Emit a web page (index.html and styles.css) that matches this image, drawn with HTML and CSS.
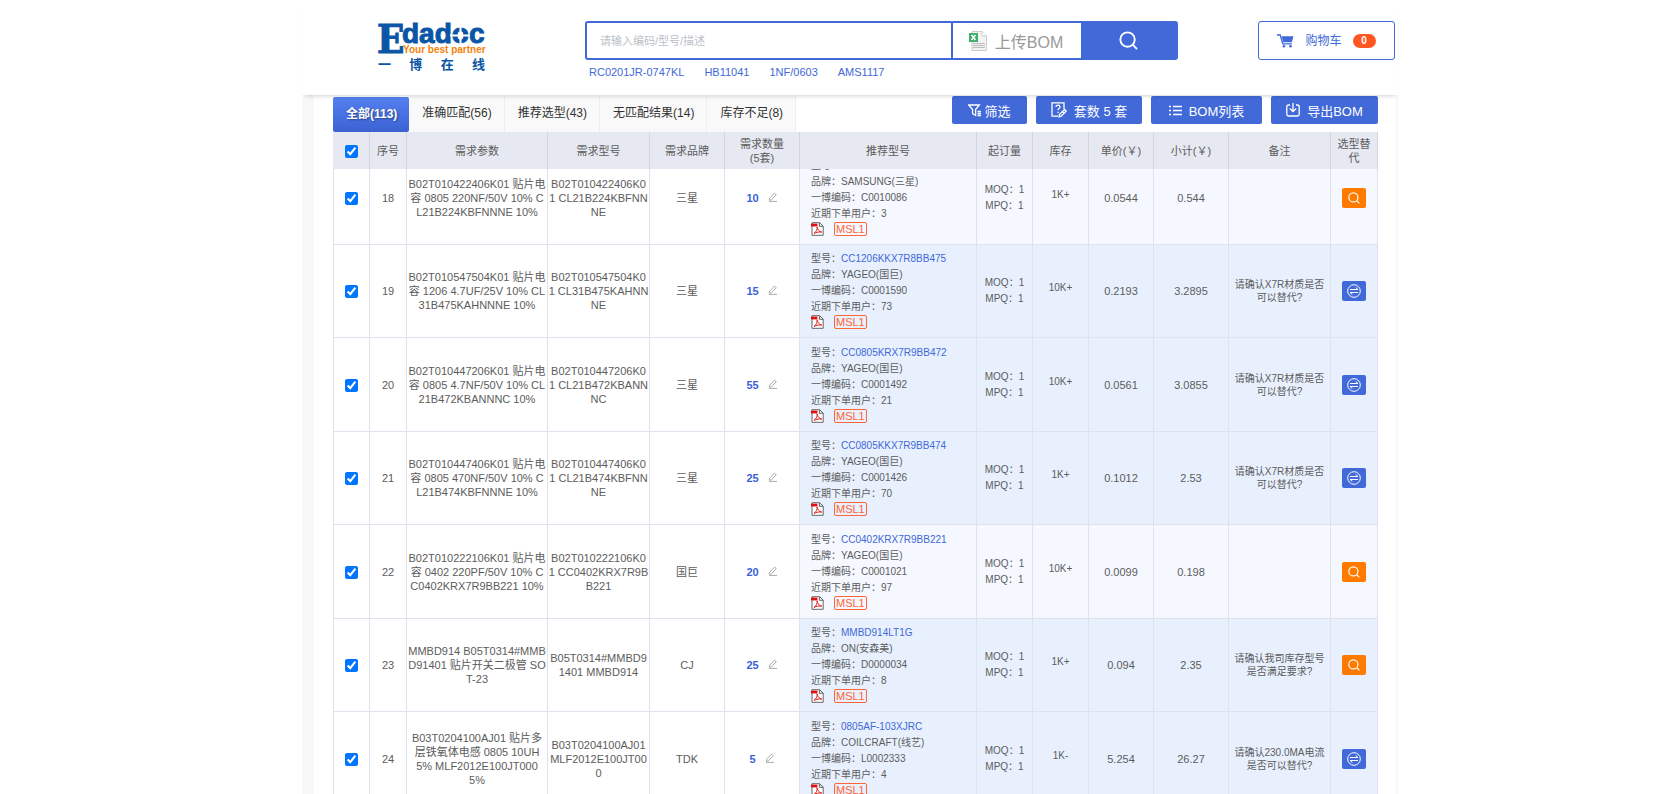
FILE: index.html
```html
<!DOCTYPE html>
<html lang="zh-CN">
<head>
    <meta charset="UTF-8">
    <meta name="viewport" content="width=device-width, initial-scale=1.0">
    <title>BOM配单 - 一博在线</title>
    <link rel="stylesheet" href="styles.css">
</head>
<body>
    <!-- 公用图标 -->
    <svg class="sprite" aria-hidden="true">
        <symbol id="i-search" viewBox="0 0 20 20"><circle cx="9" cy="9" r="7.6"/><path d="M14.5 14.5L19 19"/></symbol>
        <symbol id="i-swap" viewBox="0 0 14 14"><circle cx="7" cy="7" r="6.3"/><path d="M3 5.5h8L8.7 3.5M11 8.5H3l2.3 2"/></symbol>
        <symbol id="i-edit" viewBox="0 0 10 10"><path d="M1.6 6.2L6.6 1.1l1.7 1.6-5 5.1-2 .5zM1 9.4h8"/></symbol>
        <symbol id="i-pdf" viewBox="0 0 13 14"><path class="page" d="M1 .7h7.6l3.6 3.4v9.2H1zM8.4.7v3.6h3.8"/><path class="mark" d="M3 11.4c2.4-1.6 3.6-4.4 3-6.6.6 3 2.4 4.9 4.8 5.3-2.6-.4-5.4.1-7.8 1.3"/><path class="bar" d="M0 1.6h6.4v2.8H0z"/></symbol>
    </svg>

    <div class="page-wrap">
        <header class="header">
            <a href="#" class="logo" aria-label="一博在线">
                <svg class="logo-mark" viewBox="0 0 110 34">
                    <text x="-1" y="32" class="logo-e">E</text>
                    <text x="24" y="22" class="logo-name">dadoc</text>
                    <path class="logo-cut" d="M82.5 4v20M72 14.5h20"/>
                    <text x="25" y="32" class="logo-slogan">Your best partner</text>
                </svg>
                <span class="logo-cn"><b>一</b><b>博</b><b>在</b><b>线</b></span>
            </a>

            <div class="search">
                <form class="search-form">
                    <input type="search" class="search-input" aria-label="搜索" placeholder="请输入编码/型号/描述">
                    <button type="button" class="upload-btn">
                        <svg width="18" height="20" viewBox="0 0 18 20"><path d="M3 .5h10l4.5 4.5v14.5H3z" fill="#f3f3f3" stroke="#ccc"/><path d="M13 .5V5h4.5" fill="#fff" stroke="#ccc"/><path d="M4 12.5h12M4 14.5h12M4 16.5h12" stroke="#bbb"/><path d="M0 2h9v9H0z" fill="#3eae68"/><path d="M2.5 4l4 5M6.5 4l-4 5" stroke="#fff" stroke-width="1.5"/></svg>
                        上传BOM
                    </button>
                    <button type="submit" class="search-btn" aria-label="搜索"><svg class="line" width="19" height="19"><use href="#i-search"/></svg></button>
                </form>
                <nav class="hot-words">
                    <a href="#">RC0201JR-0747KL</a>
                    <a href="#">HB11041</a>
                    <a href="#">1NF/0603</a>
                    <a href="#">AMS1117</a>
                </nav>
            </div>

            <a href="#" class="cart">
                <svg width="17" height="14" viewBox="0 0 17 14"><path d="M0 1h3.2l2.6 8.8h9" fill="none" stroke="#4169d8" stroke-width="1.3"/><path d="M4.6 2.2H16.5l-1.7 6H6.3z" fill="#4169d8"/><circle cx="7" cy="12.3" r="1.3" fill="#4169d8"/><circle cx="13.5" cy="12.3" r="1.3" fill="#4169d8"/></svg>
                <span>购物车</span>
                <span class="cart-num">0</span>
            </a>
        </header>

        <main class="main">
            <div class="toolbar">
                <nav class="tabs">
                    <a href="#" class="active">全部(113)</a>
                    <a href="#">准确匹配(56)</a>
                    <a href="#">推荐选型(43)</a>
                    <a href="#">无匹配结果(14)</a>
                    <a href="#">库存不足(8)</a>
                </nav>
                <div class="actions">
                    <button type="button" class="btn btn-filter"><svg class="line" width="13" height="13" viewBox="0 0 13 13"><path d="M.7 1h10.6L7.6 5.5v5.8l-3-1.6V5.5zM9.5 7.5H13M9.5 9.5H13M9.5 11.5H13"/></svg>筛选</button>
                    <button type="button" class="btn btn-sets"><svg class="line" width="16" height="16" viewBox="0 0 16 16"><path d="M13 7V.8H1v13.4h6M5 5c0-2.6 4-2.6 4 0 0 1.5-2 1.5-2 3.2M7 9.8v1.2M8.5 12.5l5-5 1.7 1.7-5 5-2.2.6zM11.5 9.5l1.7 1.7"/></svg>套数 5 套</button>
                    <button type="button" class="btn btn-list"><svg class="line" width="13" height="11" viewBox="0 0 13 11"><path d="M0 1.5h2M4 1.5h9M0 5.5h2M4 5.5h9M0 9.5h2M4 9.5h9"/></svg>BOM列表</button>
                    <button type="button" class="btn"><svg class="line" width="14" height="14" viewBox="0 0 14 14"><path d="M4 2H2.5Q.8 2 .8 3.7v7.6q0 1.7 1.7 1.7h9q1.7 0 1.7-1.7V3.7Q13.2 2 11.5 2H10M7 0v8.5M3.8 5.5L7 8.7l3.2-3.2"/></svg>导出BOM</button>
                </div>
            </div>

            <table class="bom bom-head">
                <colgroup><col class="w-check"><col class="w-no"><col class="w-param"><col class="w-model"><col class="w-brand"><col class="w-qty"><col class="w-rec"><col class="w-moq"><col class="w-stock"><col class="w-price"><col class="w-sum"><col class="w-remark"><col class="w-op"></colgroup>
                <thead>
                    <tr>
                        <th><input type="checkbox" aria-label="全选" checked></th>
                        <th>序号</th>
                        <th>需求参数</th>
                        <th>需求型号</th>
                        <th>需求品牌</th>
                        <th>需求数量<br>(5套)</th>
                        <th>推荐型号</th>
                        <th>起订量</th>
                        <th>库存</th>
                        <th>单价(￥)</th>
                        <th>小计(￥)</th>
                        <th>备注</th>
                        <th>选型替<br>代</th>
                    </tr>
                </thead>
            </table>

            <div class="bom-scroll">
                <table class="bom bom-body">
                    <colgroup><col class="w-check"><col class="w-no"><col class="w-param"><col class="w-model"><col class="w-brand"><col class="w-qty"><col class="w-rec"><col class="w-moq"><col class="w-stock"><col class="w-price"><col class="w-sum"><col class="w-remark"><col class="w-op"></colgroup>
                    <tbody>
                        <tr class="exact">
                            <td><input type="checkbox" aria-label="选择18" checked></td>
                            <td>18</td>
                            <td>B02T010422406K01 贴片电<br>容 0805 220NF/50V 10% C<br>L21B224KBFNNNE 10%</td>
                            <td>B02T010422406K0<br>1 CL21B224KBFNN<br>NE</td>
                            <td>三星</td>
                            <td class="qty"><b>10</b><svg><use href="#i-edit"/></svg></td>
                            <td class="rec">
                                <p>型号：</p>
                                <p>品牌：SAMSUNG(三星)</p>
                                <p>一博编码：C0010086</p>
                                <p>近期下单用户：3</p>
                                <div class="tags"><svg class="pdf"><use href="#i-pdf"/></svg><span class="msl">MSL1</span></div>
                            </td>
                            <td class="moq">MOQ：1<br>MPQ：1</td>
                            <td class="stock">1K+</td>
                            <td>0.0544</td>
                            <td>0.544</td>
                            <td class="remark"></td>
                            <td><button type="button" class="op op-search" aria-label="选型"><svg class="line"><use href="#i-search"/></svg></button></td>
                        </tr>
                        <tr>
                            <td><input type="checkbox" aria-label="选择19" checked></td>
                            <td>19</td>
                            <td>B02T010547504K01 贴片电<br>容 1206 4.7UF/25V 10% CL<br>31B475KAHNNNE 10%</td>
                            <td>B02T010547504K0<br>1 CL31B475KAHNN<br>NE</td>
                            <td>三星</td>
                            <td class="qty"><b>15</b><svg><use href="#i-edit"/></svg></td>
                            <td class="rec">
                                <p>型号：<a href="#">CC1206KKX7R8BB475</a></p>
                                <p>品牌：YAGEO(国巨)</p>
                                <p>一博编码：C0001590</p>
                                <p>近期下单用户：73</p>
                                <div class="tags"><svg class="pdf"><use href="#i-pdf"/></svg><span class="msl">MSL1</span></div>
                            </td>
                            <td class="moq">MOQ：1<br>MPQ：1</td>
                            <td class="stock">10K+</td>
                            <td>0.2193</td>
                            <td>3.2895</td>
                            <td class="remark">请确认X7R材质是否<br>可以替代?</td>
                            <td><button type="button" class="op" aria-label="替代"><svg class="line"><use href="#i-swap"/></svg></button></td>
                        </tr>
                        <tr>
                            <td><input type="checkbox" aria-label="选择20" checked></td>
                            <td>20</td>
                            <td>B02T010447206K01 贴片电<br>容 0805 4.7NF/50V 10% CL<br>21B472KBANNNC 10%</td>
                            <td>B02T010447206K0<br>1 CL21B472KBANN<br>NC</td>
                            <td>三星</td>
                            <td class="qty"><b>55</b><svg><use href="#i-edit"/></svg></td>
                            <td class="rec">
                                <p>型号：<a href="#">CC0805KRX7R9BB472</a></p>
                                <p>品牌：YAGEO(国巨)</p>
                                <p>一博编码：C0001492</p>
                                <p>近期下单用户：21</p>
                                <div class="tags"><svg class="pdf"><use href="#i-pdf"/></svg><span class="msl">MSL1</span></div>
                            </td>
                            <td class="moq">MOQ：1<br>MPQ：1</td>
                            <td class="stock">10K+</td>
                            <td>0.0561</td>
                            <td>3.0855</td>
                            <td class="remark">请确认X7R材质是否<br>可以替代?</td>
                            <td><button type="button" class="op" aria-label="替代"><svg class="line"><use href="#i-swap"/></svg></button></td>
                        </tr>
                        <tr>
                            <td><input type="checkbox" aria-label="选择21" checked></td>
                            <td>21</td>
                            <td>B02T010447406K01 贴片电<br>容 0805 470NF/50V 10% C<br>L21B474KBFNNNE 10%</td>
                            <td>B02T010447406K0<br>1 CL21B474KBFNN<br>NE</td>
                            <td>三星</td>
                            <td class="qty"><b>25</b><svg><use href="#i-edit"/></svg></td>
                            <td class="rec">
                                <p>型号：<a href="#">CC0805KKX7R9BB474</a></p>
                                <p>品牌：YAGEO(国巨)</p>
                                <p>一博编码：C0001426</p>
                                <p>近期下单用户：70</p>
                                <div class="tags"><svg class="pdf"><use href="#i-pdf"/></svg><span class="msl">MSL1</span></div>
                            </td>
                            <td class="moq">MOQ：1<br>MPQ：1</td>
                            <td class="stock">1K+</td>
                            <td>0.1012</td>
                            <td>2.53</td>
                            <td class="remark">请确认X7R材质是否<br>可以替代?</td>
                            <td><button type="button" class="op" aria-label="替代"><svg class="line"><use href="#i-swap"/></svg></button></td>
                        </tr>
                        <tr class="exact">
                            <td><input type="checkbox" aria-label="选择22" checked></td>
                            <td>22</td>
                            <td>B02T010222106K01 贴片电<br>容 0402 220PF/50V 10% C<br>C0402KRX7R9BB221 10%</td>
                            <td>B02T010222106K0<br>1 CC0402KRX7R9B<br>B221</td>
                            <td>国巨</td>
                            <td class="qty"><b>20</b><svg><use href="#i-edit"/></svg></td>
                            <td class="rec">
                                <p>型号：<a href="#">CC0402KRX7R9BB221</a></p>
                                <p>品牌：YAGEO(国巨)</p>
                                <p>一博编码：C0001021</p>
                                <p>近期下单用户：97</p>
                                <div class="tags"><svg class="pdf"><use href="#i-pdf"/></svg><span class="msl">MSL1</span></div>
                            </td>
                            <td class="moq">MOQ：1<br>MPQ：1</td>
                            <td class="stock">10K+</td>
                            <td>0.0099</td>
                            <td>0.198</td>
                            <td class="remark"></td>
                            <td><button type="button" class="op op-search" aria-label="选型"><svg class="line"><use href="#i-search"/></svg></button></td>
                        </tr>
                        <tr>
                            <td><input type="checkbox" aria-label="选择23" checked></td>
                            <td>23</td>
                            <td>MMBD914 B05T0314#MMB<br>D91401 贴片开关二极管 SO<br>T-23</td>
                            <td>B05T0314#MMBD9<br>1401 MMBD914</td>
                            <td>CJ</td>
                            <td class="qty"><b>25</b><svg><use href="#i-edit"/></svg></td>
                            <td class="rec">
                                <p>型号：<a href="#">MMBD914LT1G</a></p>
                                <p>品牌：ON(安森美)</p>
                                <p>一博编码：D0000034</p>
                                <p>近期下单用户：8</p>
                                <div class="tags"><svg class="pdf"><use href="#i-pdf"/></svg><span class="msl">MSL1</span></div>
                            </td>
                            <td class="moq">MOQ：1<br>MPQ：1</td>
                            <td class="stock">1K+</td>
                            <td>0.094</td>
                            <td>2.35</td>
                            <td class="remark">请确认我司库存型号<br>是否满足要求?</td>
                            <td><button type="button" class="op op-search" aria-label="选型"><svg class="line"><use href="#i-search"/></svg></button></td>
                        </tr>
                        <tr>
                            <td><input type="checkbox" aria-label="选择24" checked></td>
                            <td>24</td>
                            <td>B03T0204100AJ01 贴片多<br>层铁氧体电感 0805 10UH<br>5% MLF2012E100JT000<br>5%</td>
                            <td>B03T0204100AJ01<br>MLF2012E100JT00<br>0</td>
                            <td>TDK</td>
                            <td class="qty"><b>5</b><svg><use href="#i-edit"/></svg></td>
                            <td class="rec">
                                <p>型号：<a href="#">0805AF-103XJRC</a></p>
                                <p>品牌：COILCRAFT(线艺)</p>
                                <p>一博编码：L0002333</p>
                                <p>近期下单用户：4</p>
                                <div class="tags"><svg class="pdf"><use href="#i-pdf"/></svg><span class="msl">MSL1</span></div>
                            </td>
                            <td class="moq">MOQ：1<br>MPQ：1</td>
                            <td class="stock">1K-</td>
                            <td>5.254</td>
                            <td>26.27</td>
                            <td class="remark">请确认230.0MA电流<br>是否可以替代?</td>
                            <td><button type="button" class="op" aria-label="替代"><svg class="line"><use href="#i-swap"/></svg></button></td>
                        </tr>
                    </tbody>
                </table>
            </div>
        </main>
    </div>
</body>
</html>
```

FILE: styles.css
```css
/* 基本样式 */
* { box-sizing: border-box; }
body { margin: 0; padding-left: 35px; height: 100vh; overflow: hidden; background: #fff; color: #5c5c5c; font: 11px/14px "Liberation Sans", "Noto Sans CJK SC", sans-serif; }
a { color: #4169d8; text-decoration: none; }
button { font-family: inherit; cursor: pointer; }
p { margin: 0; }
.sprite { display: none; }
.line { fill: none; stroke: #fff; stroke-width: 1.3; }
.page-wrap { max-width: 1096px; height: 100%; margin: 0 auto; display: flex; flex-direction: column; background: #f8f8f8; }

/* 顶部 */
.header { position: relative; z-index: 1; display: flex; align-items: flex-start; flex-shrink: 0; height: 95px; padding: 21px 3px 0 76px; background: #fff; box-shadow: 0 4px 4px -3px rgba(0,0,0,0.18); }
.logo { width: 110px; flex-shrink: 0; }
.logo-mark { display: block; width: 110px; height: 34px; overflow: visible; }
.logo-e { font: bold 40px "DejaVu Serif Condensed", "DejaVu Serif", serif; fill: #0a55a5; stroke: #0a55a5; }
.logo-name { font: bold 28px "Liberation Sans", sans-serif; fill: #0a55a5; stroke: #0a55a5; }
.logo-cut { stroke: #fff; stroke-width: 2; fill: none; }
.logo-slogan { font: bold 10px "Liberation Sans", sans-serif; fill: #f5820b; }
.logo-cn { display: flex; justify-content: space-between; padding-right: 3px; font-size: 13px; line-height: 20px; color: #0a55a5; }

.search { flex: 1; margin: 0 80px 0 97px; }
.search-form { display: flex; height: 39px; border: 2px solid #4169d8; border-radius: 3px; }
.search-input { flex: 1; min-width: 0; padding: 0 13px; border: 0; outline: 0; background: none; font: inherit; }
.search-input::placeholder { color: #bbbfc8; }
.upload-btn { display: flex; align-items: center; justify-content: center; gap: 8px; width: 130px; padding: 0 2px 0 0; border: 0; border-left: 2px solid #4169d8; background: #fff; color: #999; font-size: 16px; }
.search-btn { display: flex; align-items: center; justify-content: center; width: 95px; padding: 0; border: 0; background: #4169d8; }
.search-btn .line { stroke-width: 2; }
.hot-words { display: flex; gap: 20px; padding: 5px 4px; }

.cart { display: flex; align-items: center; justify-content: center; gap: 11px; width: 137px; height: 39px; border: 1px solid #4169d8; border-radius: 3px; font-size: 12px; }
.cart-num { width: 23px; border-radius: 7px; background: #ff5722; color: #fff; font-size: 10px; font-weight: bold; text-align: center; }

/* 标签页和操作按钮 */
.main { flex: 1; min-height: 0; display: flex; flex-direction: column; margin: 0 2px 0 12px; padding: 1px 18px 0 19px; background: #fff; }
.toolbar { display: flex; justify-content: space-between; align-items: flex-start; flex-shrink: 0; height: 36px; }
.tabs { display: flex; font-size: 12px; line-height: 35px; }
.tabs a { padding: 0 12px 0 13px; border-right: 1px solid #eee; background: #f9f9f9; color: #333; }
.tabs .active { margin-top: 1px; border: 0; border-radius: 2px; background: linear-gradient(#5480f0, #3c62d2); color: #fff; font-weight: bold; text-shadow: 1px 1px 2px rgba(0,0,0,0.4); }
.actions { display: flex; gap: 9px; }
.btn { display: flex; align-items: center; justify-content: center; gap: 7px; width: 107px; height: 28px; padding: 0; border: 0; border-radius: 2px; background: #4169d8; color: #fff; font-size: 13px; }
.btn-filter { width: 75px; gap: 3px; }
.btn-sets { width: 106px; }
.btn-list { width: 111px; }

/* 表格 */
.bom { width: 100%; flex-shrink: 0; table-layout: fixed; border-collapse: separate; border-spacing: 0; text-align: center; white-space: nowrap; }
.bom th, .bom td { padding: 0; font-weight: normal; border-right: 1px solid #dfe2ec; }
.bom input { width: 13px; height: 13px; margin: 0; vertical-align: middle; }
.bom-head th { height: 37px; background: #e6e9f1; border-color: #d3d6e0; }
.bom-scroll { flex: 1; min-height: 0; overflow: hidden; }
/* 首行滚动到表头下方 */
.bom-body { margin-top: -18px; }
.bom-body td { height: 94px; border-bottom: 1px solid #dfe2ec; }
.bom-body tr:nth-child(even) td { height: 93px; }
.bom-body td:first-child { border-left: 1px solid #dfe2ec; }
.bom-body td:nth-child(n+7) { background: #e8f0fe; }
.bom-body .exact td:nth-child(n+7) { background: #f5f8ff; }
.w-check, .w-no { width: 37px; }
.w-param { width: 141px; }
.w-model, .w-remark { width: 102px; }
.w-brand, .w-qty, .w-sum { width: 75px; }
.w-rec { width: 177px; }
.w-moq, .w-stock { width: 56px; }
.w-price { width: 65px; }
.w-op { width: 47px; }

.qty b { color: #3a5fd9; }
.qty svg { width: 10px; height: 10px; margin-left: 9px; fill: none; stroke: #aaa; }
.bom-body .rec { padding: 0 0 2px 11px; text-align: left; font-size: 10px; line-height: 16px; }
.tags { display: flex; align-items: center; gap: 10px; height: 14px; }
.pdf { width: 13px; height: 14px; fill: none; stroke: #666; }
.page { fill: #fff; }
.mark { stroke: #e02020; }
.bar { fill: #e01010; stroke: none; }
.msl { padding: 0 1px; border: 1px solid #ff6536; border-radius: 2px; color: #ff6536; font-size: 11px; line-height: 12px; }
.moq { font-size: 10px; line-height: 16px; }
.bom-body .stock { padding-bottom: 6px; }
.stock { font-size: 10px; }
.remark { font-size: 10px; line-height: 13px; }
.op { display: inline-flex; align-items: center; justify-content: center; width: 24px; height: 20px; padding: 0; border: 0; border-radius: 2px; background: #4169d8; vertical-align: middle; }
.op svg { width: 14px; height: 14px; stroke-width: 1; }
.op-search { background: #ff7b00; }
.op-search svg { width: 12px; height: 12px; stroke-width: 2; }
```
